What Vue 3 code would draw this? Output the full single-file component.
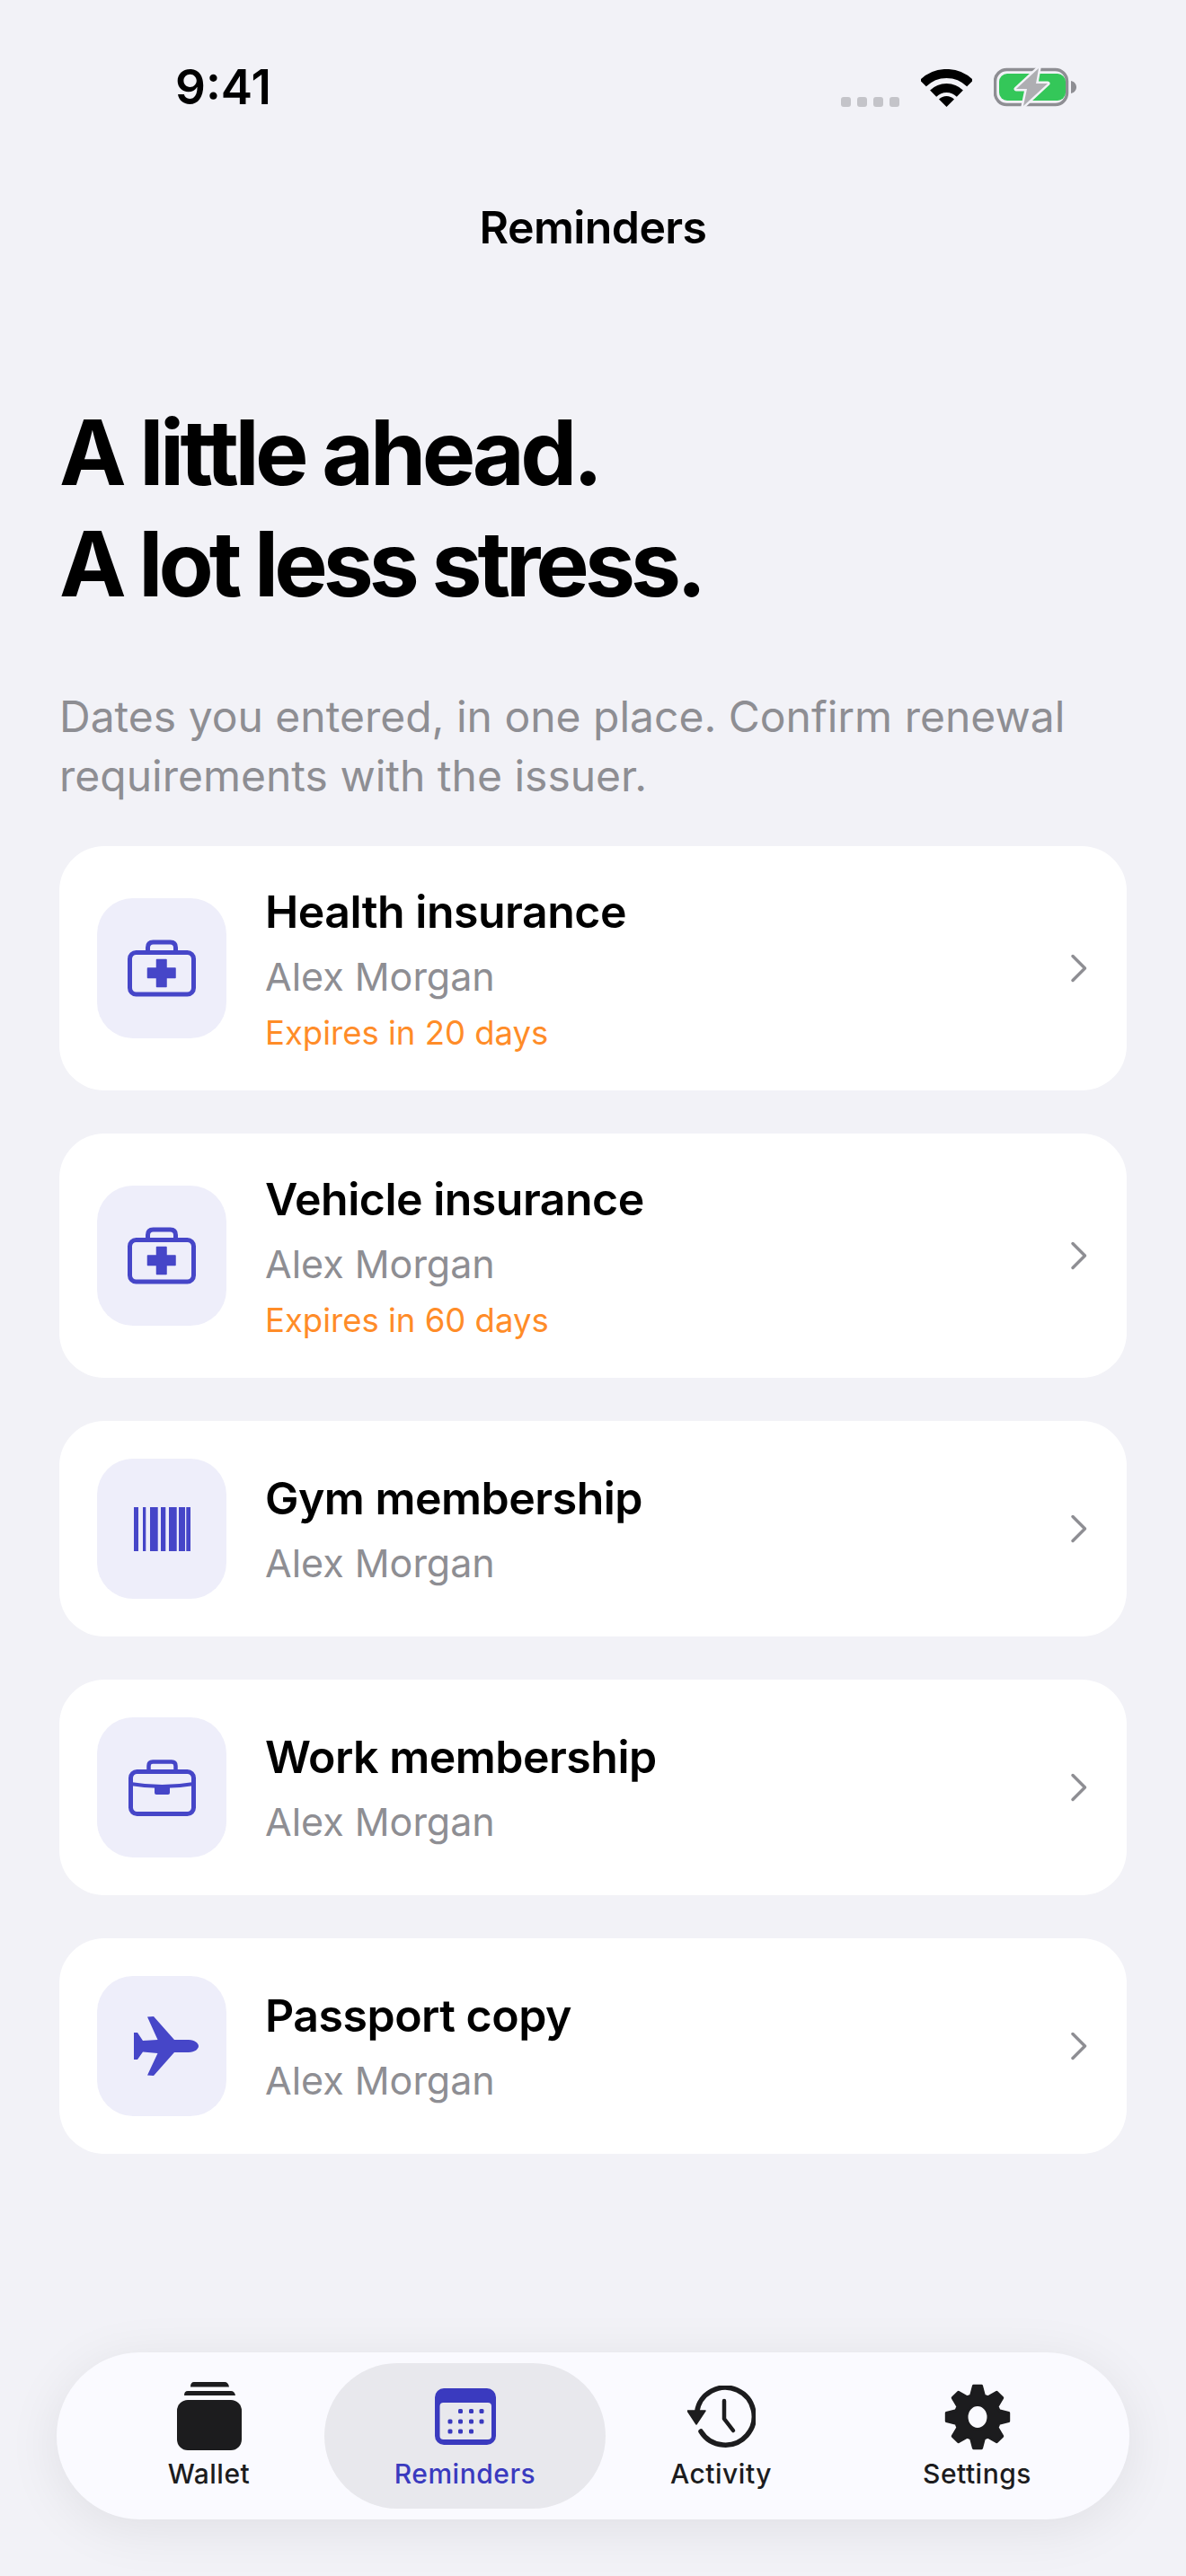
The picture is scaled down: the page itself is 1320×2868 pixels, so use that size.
<template>
  <div class="screen">
    <div class="status">
      <span class="time">9:41</span>
      <div class="status-icons">
        <div class="signal"><i></i><i></i><i></i><i></i></div>
        <svg class="wifi" width="57" height="42" viewBox="0 0 57 42">
          <path d="M2.3 15.8A37 37 0 0 1 54.7 15.8" fill="none" stroke="#000" stroke-width="10" />
          <path d="M13.65 27.15A21 21 0 0 1 43.35 27.15" fill="none" stroke="#000" stroke-width="10" />
          <path d="M28.5 42L20 33.5A12 12 0 0 1 37 33.5Z" fill="#000" />
        </svg>
        <svg class="battery" width="92" height="44" viewBox="0 0 92 44">
          <rect x="1.5" y="2.5" width="80" height="39" rx="13" fill="none" stroke="#8e8e93" stroke-width="3.5" />
          <rect x="6" y="7" width="74" height="30" rx="9" fill="#34c759" />
          <path d="M86 15C90 16 92 19 92 22C92 25 90 28 86 29Z" fill="#8e8e93" />
          <path d="M50 1L25 24H37L33 43L60 18H47Z" fill="#aeaeb2" stroke="#f2f2f7" stroke-width="5" stroke-linejoin="round" paint-order="stroke" />
        </svg>
      </div>
    </div>

    <div class="nav-title">Reminders</div>

    <div class="hero">
      <h1><span class="first">A little ahead.</span><br />A lot less stress.</h1>
      <p>Dates you entered, in one place. Confirm renewal requirements with the issuer.</p>
    </div>

    <div class="list">
      <div class="card" v-for="item in items" :key="item.title">
        <div class="tile">
          <svg v-if="item.icon === 'kit'" width="76" height="64" viewBox="0 0 76 64">
            <path d="M22.500 14V9Q22.500 3 28.500 3H47.500Q53.500 3 53.500 9V14" fill="none" stroke="#4646c8" stroke-width="5" />
            <rect x="2.500" y="14.500" width="71" height="46.500" rx="7" fill="none" stroke="#4646c8" stroke-width="5" />
            <path d="M32.500 22.500H43V32H53V42.500H43V52.500H32.500V42.500H22.500V32H32.500Z" fill="#4646c8" stroke="#4646c8" stroke-width="1.500" stroke-linejoin="round" />
          </svg>
          <svg v-else-if="item.icon === 'barcode'" width="63" height="49" viewBox="0 0 63 49" fill="#4646c8">
            <rect x="0" width="5" height="49" />
            <rect x="10" width="3.300" height="49" />
            <rect x="18" width="8.700" height="49" />
            <rect x="30" width="5.300" height="49" />
            <rect x="39" width="8.700" height="49" />
            <rect x="50" width="7" height="49" />
            <rect x="58.300" width="4.700" height="49" />
          </svg>
          <svg v-else-if="item.icon === 'case'" width="75" height="63" viewBox="0 0 75 63">
            <path d="M22.500 12V7Q22.500 2.500 27 2.500H48Q52.500 2.500 52.500 7V12" fill="none" stroke="#4646c8" stroke-width="4.500" />
            <rect x="2.500" y="13.500" width="70" height="47" rx="7" fill="none" stroke="#4646c8" stroke-width="5" />
            <path d="M2 27Q37.500 33 73 27" fill="none" stroke="#4646c8" stroke-width="4" />
            <path d="M29 30H46V37Q46 39 44 39H31Q29 39 29 37Z" fill="#4646c8" />
          </svg>
          <svg v-else class="plane" width="73" height="66" viewBox="0 0 73 66">
            <path d="M16 .5L23 0L46 26H62C69 26 73 30 73 33C73 36 69 40 62 40H46L23 66L16 65.500L27.500 41L11 39.500L5 48H1V18H5L11 27L27.500 26Z" fill="#4646c8" />
          </svg>
        </div>
        <div class="text" :class="{ short: !item.due }">
          <div class="title">{{ item.title }}</div>
          <div class="name">Alex Morgan</div>
          <div class="due" v-if="item.due">{{ item.due }}</div>
        </div>
        <svg class="chevron" width="20" height="32" viewBox="0 0 20 32">
          <path d="M4 2.500L17.500 16L4 29.500" fill="none" stroke="#8e8e93" stroke-width="3.500" stroke-linecap="round" stroke-linejoin="round" />
        </svg>
      </div>
    </div>

    <div class="tabbar">
      <div class="tab">
        <svg width="72" height="76" viewBox="0 0 72 76" fill="#1c1c1e">
          <path d="M15 5.500Q15 0 19 0H53Q57 0 58 5.500Z" />
          <path d="M8 15Q8 10 12 10H60Q64 10 65 15Z" />
          <rect y="20" width="72" height="56" rx="12" />
        </svg>
        <span>Wallet</span>
      </div>
      <div class="tab active">
        <svg width="68" height="63" viewBox="0 0 68 63">
          <rect width="68" height="63" rx="10" fill="#3a3abf" />
          <rect x="5.500" y="16" width="57.500" height="41" rx="4" fill="#e8e8ed" />
          <g fill="#3a3abf">
            <rect v-for="d in calendarDots" :key="d[0] + '-' + d[1]" :x="d[0]" :y="d[1]" width="5" height="5" rx="1.500" />
          </g>
        </svg>
        <span>Reminders</span>
      </div>
      <div class="tab">
        <svg width="76" height="72" viewBox="0 0 76 72">
          <path d="M15 51A32 32 0 1 0 10.500 30" fill="none" stroke="#1c1c1e" stroke-width="5.500" stroke-linecap="round" />
          <path d="M0 28H20L10 43Z" fill="#1c1c1e" stroke="#1c1c1e" stroke-width="1.500" stroke-linejoin="round" />
          <path d="M41 17V37L51 50" fill="none" stroke="#1c1c1e" stroke-width="4.500" stroke-linecap="round" stroke-linejoin="round" />
        </svg>
        <span>Activity</span>
      </div>
      <div class="tab">
        <svg width="74" height="74" viewBox="-37 -37 74 74">
          <path :d="gearPath" fill="#1c1c1e" fill-rule="evenodd" stroke="#1c1c1e" stroke-width="3" stroke-linejoin="round" />
        </svg>
        <span>Settings</span>
      </div>
    </div>
  </div>
</template>

<script setup>
const items = [
  { title: 'Health insurance', due: 'Expires in 20 days', icon: 'kit' },
  { title: 'Vehicle insurance', due: 'Expires in 60 days', icon: 'kit' },
  { title: 'Gym membership', icon: 'barcode' },
  { title: 'Work membership', icon: 'case' },
  { title: 'Passport copy', icon: 'plane' }
]

// calendar dots, 3 rows
const cols = [14.5, 26, 38, 49.5]
const calendarDots = [
  [cols[1], 23], [cols[2], 23], [cols[3], 23],
  [cols[0], 34.5], [cols[1], 34.5], [cols[2], 34.5], [cols[3], 34.5],
  [cols[0], 45.5], [cols[1], 45.5], [cols[2], 45.5]
]

// gear with 8 teeth
const point = (r, a) => `${(r * Math.sin(a)).toFixed(2)} ${(-r * Math.cos(a)).toFixed(2)}`
const makeGear = () => {
  const step = Math.PI / 4
  let d = ''
  for (let i = 0; i < 8; i++) {
    const a = i * step
    d += `${i ? 'L' : 'M'}${point(25, a - 0.3)}L${point(35, a - 0.13)}L${point(35, a + 0.13)}L${point(25, a + 0.3)}`
  }
  return d + 'ZM12 0A12 13.500 0 1 0 -12 0A12 13.500 0 1 0 12 0Z'
}
const gearPath = makeGear()
</script>

<style>
html,
body {
  margin: 0;
  background: #f2f2f7;
}
</style>

<style scoped>
.screen {
  width: 1320px;
  height: 2868px;
  box-sizing: border-box;
  display: flex;
  flex-direction: column;
  background: #f2f2f7;
  font-family: Inter, "Liberation Sans", sans-serif;
  color: #000;
  overflow: hidden;
}

.status {
  height: 62px;
  padding: 66px 122px 0 195px;
  display: flex;
  justify-content: space-between;
  align-items: flex-start;
}

.time {
  font-size: 53px;
  line-height: 62px;
  font-weight: 600;
}

.status-icons {
  display: flex;
  align-items: flex-end;
  padding-top: 9px;
}

.signal {
  display: flex;
  gap: 7px;
  margin-right: 24px;
}

.signal i {
  width: 11px;
  height: 11px;
  border-radius: 3px;
  background: #c4c4c9;
}

.wifi {
  margin-right: 24px;
}

.nav-title {
  margin-top: 94px;
  text-align: center;
  font-size: 50px;
  line-height: 62px;
  font-weight: 600;
  letter-spacing: -0.6px;
}

.hero {
  padding: 0 66px;
  margin-top: 158px;
}

h1 {
  margin: 0;
  font-size: 100px;
  line-height: 124px;
  font-weight: 700;
  letter-spacing: -5px;
}

h1 .first {
  letter-spacing: -4.500px;
}

.hero p {
  margin: 75px 0 0;
  font-size: 48px;
  line-height: 66px;
  color: #8e8e93;
}

.list {
  display: flex;
  flex-direction: column;
  gap: 48px;
  margin: 45px 66px 0;
}

.card {
  min-height: 240px;
  box-sizing: border-box;
  padding: 40px 44px 40px 42px;
  display: flex;
  align-items: center;
  gap: 43px;
  background: #fff;
  border-radius: 50px;
}

.tile {
  width: 144px;
  height: 156px;
  flex: none;
  display: flex;
  align-items: center;
  justify-content: center;
  border-radius: 40px;
  background: #eeeefa;
}

.plane {
  margin-left: 9px;
}

.text {
  flex: 1;
  min-width: 0;
}

.text.short {
  padding-top: 10px;
}

.title {
  font-size: 50px;
  line-height: 66px;
  font-weight: 600;
  letter-spacing: -0.500px;
}

.name {
  font-size: 43px;
  line-height: 78px;
  color: #8e8e93;
}

.due {
  font-size: 36.500px;
  line-height: 48px;
  color: #ff8c28;
}

.chevron {
  flex: none;
}

.tabbar {
  margin: auto 63px 63px;
  height: 186px;
  box-sizing: border-box;
  padding: 12px 27px;
  display: grid;
  grid-template-columns: repeat(4, 285px);
  background: #fafaff;
  border-radius: 93px;
  box-shadow: 0 10px 60px rgba(0, 0, 0, 0.08);
}

.tab {
  height: 162px;
  display: flex;
  flex-direction: column;
  align-items: center;
  justify-content: flex-end;
  padding-bottom: 21px;
  box-sizing: border-box;
  color: #1c1c1e;
  font-size: 30px;
  line-height: 36px;
  font-weight: 500;
  letter-spacing: 0.5px;
}

.tab svg {
  margin-bottom: 8px;
}

.tab.active {
  margin: 0 -14px;
  border-radius: 81px;
  background: #e8e8ed;
  color: #3a3abf;
}

.tab.active svg {
  margin-bottom: 14px;
}
</style>
